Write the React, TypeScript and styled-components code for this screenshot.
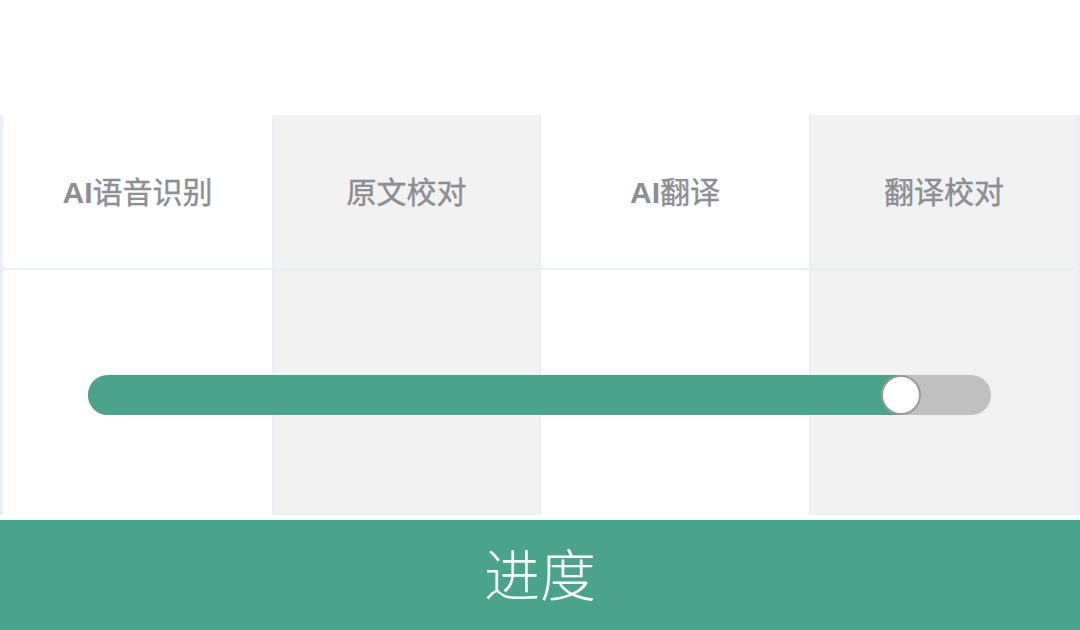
import React from "react";
import styled, { createGlobalStyle } from "styled-components";

const Global = createGlobalStyle`
  html, body { margin: 0; padding: 0; background: #ffffff; }
  body { font-family: "Noto Sans CJK SC", "Noto Sans", sans-serif; }
`;

const Page = styled.div`
  width: 1080px;
  height: 630px;
  display: flex;
  flex-direction: column;
  overflow: hidden;
`;

const Board = styled.div`
  position: relative;
  margin-top: 115px;
  height: 400px;
  display: grid;
  grid-template-columns: 269px 265px 268px 266px;
  grid-template-rows: 153px 245px;
  column-gap: 2px;
  row-gap: 2px;
  padding: 0 1px 0 3px;
  background: #eceef7;
  box-sizing: border-box;
`;

const Cell = styled.div<{ $shade: boolean }>`
  background: ${(p) => (p.$shade ? "#f2f2f2" : "#ffffff")};
  display: flex;
  align-items: center;
  justify-content: center;
`;

const Label = styled.span`
  font-size: 30px;
  font-weight: 400;
  color: #8c8e93;
  letter-spacing: 0;
  margin-top: -3px;
  -webkit-text-stroke: 0.4px #8c8e93;
`;

const Latin = styled.span`
  font-family: "Liberation Sans", Arial, sans-serif;
  font-weight: 700;
  font-size: 30px;
  -webkit-text-stroke: 0;
`;

const Track = styled.div`
  position: absolute;
  left: 88px;
  top: 260px;
  width: 903px;
  height: 40px;
  border-radius: 20px;
  background: #c0c0c0;
`;

const Fill = styled.div`
  height: 100%;
  border-radius: 20px 0 0 20px;
  background: #4aa38b;
`;

const Thumb = styled.div`
  position: absolute;
  top: 0;
  width: 40px;
  height: 40px;
  margin-left: -20px;
  box-sizing: border-box;
  border-radius: 50%;
  background: #ffffff;
  border: 2px solid #9a9a9a;
`;

const Gap = styled.div`
  height: 5px;
`;

const Footer = styled.div`
  height: 110px;
  background: #4aa38b;
  display: flex;
  align-items: center;
  justify-content: center;
  color: #ffffff;
  font-size: 56px;
  font-weight: 300;
  letter-spacing: 0;
  padding-bottom: 8px;
  box-sizing: border-box;
`;

const steps: { latin?: string; text: string }[] = [
  { latin: "AI", text: "语音识别" },
  { text: "原文校对" },
  { latin: "AI", text: "翻译" },
  { text: "翻译校对" },
];

export default function App() {
  const progress = 813; // px of fill inside the track
  return (
    <Page>
      <Global />
      <Board>
        {steps.map((s, i) => (
          <Cell key={"h" + i} $shade={i % 2 === 1}>
            <Label>
              {s.latin && <Latin>{s.latin}</Latin>}
              {s.text}
            </Label>
          </Cell>
        ))}
        {steps.map((_, i) => (
          <Cell key={"b" + i} $shade={i % 2 === 1} />
        ))}
        <Track>
          <Fill style={{ width: progress }} />
          <Thumb style={{ left: progress }} />
        </Track>
      </Board>
      <Gap />
      <Footer>进度</Footer>
    </Page>
  );
}
